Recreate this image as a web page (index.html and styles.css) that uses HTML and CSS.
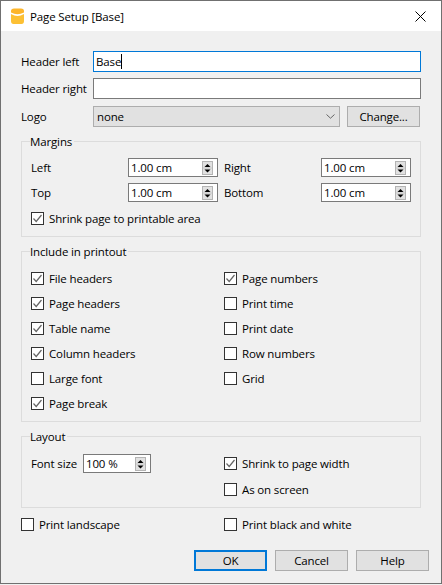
FILE: index.html
```html
<!DOCTYPE html>
<html lang="en">
<head>
    <meta charset="UTF-8">
    <title>Page Setup [Base]</title>
    <link rel="stylesheet" href="styles.css">
</head>
<body>

<svg class="defs" width="0" height="0">
    <symbol id="tick" viewBox="0 0 13 13">
        <polyline points="2.5,6.5 5.2,9.5 10.5,3" fill="none" stroke="#666" stroke-width="1.2"/>
    </symbol>
    <symbol id="spin" viewBox="0 0 11 14">
        <rect x="0.5" y="0.5" width="10" height="13" fill="#e1e1e1" stroke="#b4b4b4"/>
        <line x1="1" y1="7" x2="10" y2="7" stroke="#c8c8c8"/>
        <polygon points="5.5,3 8.5,6 2.5,6" fill="#000"/>
        <polygon points="5.5,11.5 8.5,8.5 2.5,8.5" fill="#000"/>
    </symbol>
</svg>

<div class="window">
    <div class="titlebar">
        <svg class="app-icon" width="13" height="16" viewBox="0 0 13 16">
            <path d="M0 6 Q6.5 10 13 6 V13 Q13 16 10.5 16 H2.5 Q0 16 0 13 Z" fill="#fcc034"/>
            <path d="M0 3 Q0 0.5 3 0.5 H10 Q13 0.5 13 3 V4.5 Q6.5 8 0 4.5 Z" fill="#fdb52a"/>
        </svg>
        <span class="title">Page Setup [Base]</span>
        <svg class="close" width="11" height="11" viewBox="0 0 11 11">
            <path d="M0.5 0.5 L10.5 10.5 M10.5 0.5 L0.5 10.5" stroke="#000" stroke-width="1" fill="none"/>
        </svg>
    </div>

    <div class="content">
        <div class="header-row">
            <label>Header left</label>
            <div class="textbox focused">Base<span class="caret"></span></div>
        </div>
        <div class="header-row">
            <label>Header right</label>
            <div class="textbox"></div>
        </div>
        <div class="header-row logo-row">
            <label>Logo</label>
            <div class="combo">
                <span>none</span>
                <svg width="9" height="5" viewBox="0 0 9 5">
                    <polyline points="0.5,0.5 4.5,4.2 8.5,0.5" fill="none" stroke="#666"/>
                </svg>
            </div>
            <button class="btn change-btn" type="button">Change...</button>
        </div>

        <fieldset class="group margins">
            <legend>Margins</legend>
            <div class="two-cols margin-rows">
                <div class="field"><label>Left</label><div class="spinbox"><span>1.00 cm</span><svg width="11" height="14"><use href="#spin"/></svg></div></div>
                <div class="field"><label>Right</label><div class="spinbox"><span>1.00 cm</span><svg width="11" height="14"><use href="#spin"/></svg></div></div>
                <div class="field"><label>Top</label><div class="spinbox"><span>1.00 cm</span><svg width="11" height="14"><use href="#spin"/></svg></div></div>
                <div class="field"><label>Bottom</label><div class="spinbox"><span>1.00 cm</span><svg width="11" height="14"><use href="#spin"/></svg></div></div>
            </div>
            <div class="check shrink-check"><span class="box"><svg width="13" height="13"><use href="#tick"/></svg></span>Shrink page to printable area</div>
        </fieldset>

        <fieldset class="group include">
            <legend>Include in printout</legend>
            <div class="two-cols check-rows">
                <div class="check"><span class="box"><svg width="13" height="13"><use href="#tick"/></svg></span>File headers</div>
                <div class="check"><span class="box"><svg width="13" height="13"><use href="#tick"/></svg></span>Page numbers</div>
                <div class="check"><span class="box"><svg width="13" height="13"><use href="#tick"/></svg></span>Page headers</div>
                <div class="check"><span class="box"></span>Print time</div>
                <div class="check"><span class="box"><svg width="13" height="13"><use href="#tick"/></svg></span>Table name</div>
                <div class="check"><span class="box"></span>Print date</div>
                <div class="check"><span class="box"><svg width="13" height="13"><use href="#tick"/></svg></span>Column headers</div>
                <div class="check"><span class="box"></span>Row numbers</div>
                <div class="check"><span class="box"></span>Large font</div>
                <div class="check"><span class="box"></span>Grid</div>
                <div class="check"><span class="box"><svg width="13" height="13"><use href="#tick"/></svg></span>Page break</div>
            </div>
        </fieldset>

        <fieldset class="group layout">
            <legend>Layout</legend>
            <div class="two-cols">
                <div class="font-size">
                    <label>Font size</label>
                    <div class="spinbox small"><span>100 %</span><svg width="11" height="14"><use href="#spin"/></svg></div>
                </div>
                <div class="layout-checks">
                    <div class="check"><span class="box"><svg width="13" height="13"><use href="#tick"/></svg></span>Shrink to page width</div>
                    <div class="check"><span class="box"></span>As on screen</div>
                </div>
            </div>
        </fieldset>

        <div class="print-row">
            <div class="check"><span class="box"></span>Print landscape</div>
            <div class="check"><span class="box"></span>Print black and white</div>
        </div>

        <div class="footer">
            <button class="btn default" type="button">OK</button>
            <button class="btn" type="button">Cancel</button>
            <button class="btn" type="button">Help</button>
        </div>
    </div>
</div>

</body>
</html>
```

FILE: styles.css
```css
body {
    margin: 0;
    background-color: #f0f0f0;
    font-family: "Open Sans", Arial, sans-serif;
    font-size: 11.5px;
    letter-spacing: -0.14px;
    color: #000;
}
.defs {
    display: block;
    height: 0;
}
.window {
    box-sizing: border-box;
    width: 442px;
    height: 584px;
    border: 1px solid #707070;
    background-color: #f0f0f0;
}
.titlebar {
    display: flex;
    align-items: center;
    height: 30px;
    background-color: white;
    padding: 0 15px 0 10px;
}
.app-icon {
    margin-right: 6px;
}
.title {
    flex: 1;
}
.content {
    padding: 20px 20px 0 20px;
}
.header-row {
    display: flex;
    align-items: center;
    height: 21px;
    margin-bottom: 6px;
}
.header-row label {
    width: 72px;
    flex: none;
}
.logo-row {
    margin-top: 7px;
    margin-bottom: 0;
}
.textbox {
    flex: 1;
    box-sizing: border-box;
    height: 21px;
    line-height: 19px;
    padding: 0 2px;
    background-color: white;
    border: 1px solid #7a7a7a;
}
.textbox.focused {
    border-color: #0078d7;
}
.caret {
    display: inline-block;
    width: 1px;
    height: 15px;
    background-color: #000;
    vertical-align: -3px;
}
.combo {
    flex: 1;
    box-sizing: border-box;
    height: 21px;
    display: flex;
    align-items: center;
    justify-content: space-between;
    padding: 0 4px 0 3px;
    background-color: #e1e1e1;
    border: 1px solid #adadad;
}
.btn {
    box-sizing: border-box;
    width: 73px;
    height: 21px;
    padding: 0;
    background-color: #e1e1e1;
    border: 1px solid #adadad;
    font-family: inherit;
    font-size: inherit;
    letter-spacing: inherit;
    color: #000;
}
.btn.default {
    border: 2px solid #0078d7;
}
.change-btn {
    margin-left: 7px;
    margin-right: 1px;
}
.group {
    margin: 0;
    padding: 0 9px;
    min-width: 0;
    box-sizing: border-box;
    border: 1px solid #dcdcdc;
}
.group legend {
    padding: 2px 2px 0 0;
    margin-left: -1px;
    line-height: 14px;
}
.margins {
    margin-top: 6px;
    height: 104px;
}
.include {
    margin-top: 6px;
    height: 179px;
}
.layout {
    margin-top: 6px;
    height: 80px;
}
.two-cols {
    display: grid;
    grid-template-columns: 193px 1fr;
}
.margin-rows {
    margin-top: 9px;
    row-gap: 6px;
}
.field {
    display: flex;
    align-items: center;
}
.field label {
    width: 97px;
    flex: none;
}
.spinbox {
    box-sizing: border-box;
    width: 90px;
    height: 19px;
    display: flex;
    align-items: center;
    justify-content: space-between;
    padding: 0 4px 0 2px;
    background-color: white;
    border: 1px solid #7a7a7a;
}
.spinbox.small {
    width: 68px;
}
.check {
    display: flex;
    align-items: center;
    height: 25px;
}
.box {
    box-sizing: border-box;
    flex: none;
    width: 13px;
    height: 13px;
    margin-right: 5px;
    background-color: white;
    border: 1px solid #333;
}
.box svg {
    display: block;
    margin: -1px;
}
.shrink-check {
    margin-top: 4px;
}
.check-rows {
    margin-top: 7px;
}
.font-size {
    display: flex;
    align-items: center;
    height: 19px;
    margin-top: 10px;
}
.font-size label {
    width: 52px;
}
.layout-checks {
    margin-top: 6px;
}
.layout-checks .check {
    height: 26px;
}
.print-row {
    display: grid;
    grid-template-columns: 203px 1fr;
    margin-top: 4px;
}
.footer {
    display: flex;
    justify-content: flex-end;
    gap: 8px;
    margin-top: 13px;
    margin-right: -8px;
}
```
